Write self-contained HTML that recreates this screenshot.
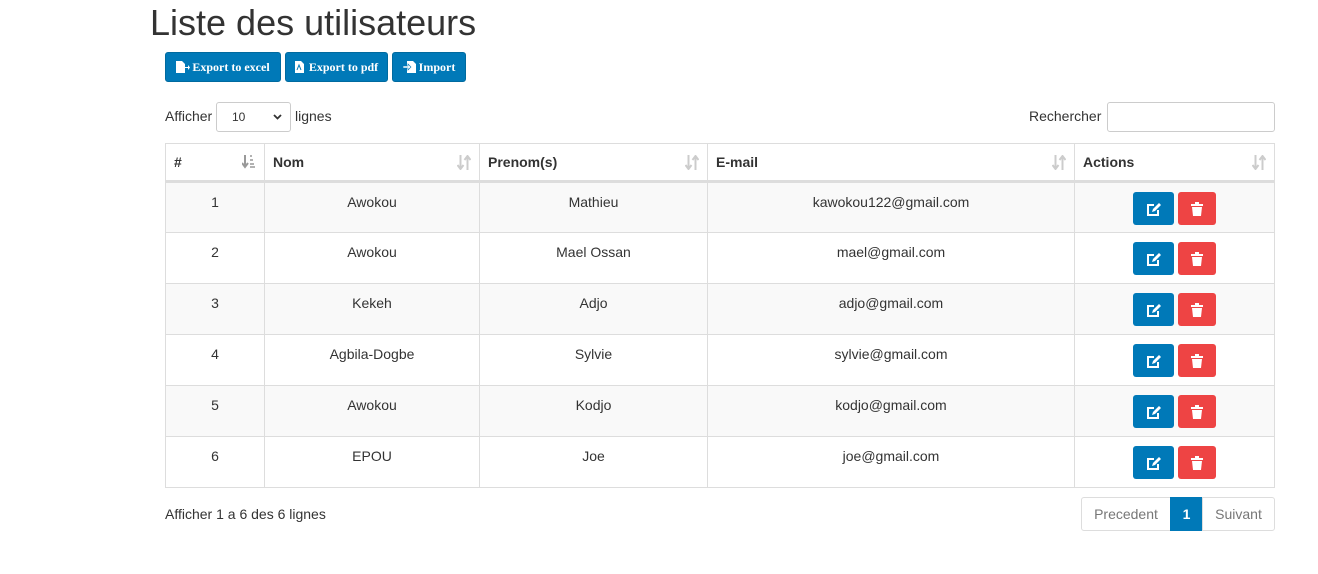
<!DOCTYPE html>
<html><head><style>
*{box-sizing:border-box}
body{margin:0;width:1318px;height:574px;background:#fff;font-family:"Liberation Sans",sans-serif;font-size:14px;color:#333;position:relative;overflow:hidden}
.abs{position:absolute}
h1{position:absolute;left:150px;top:2px;margin:0;font-weight:400;font-size:36px;color:#333}
.eb{position:absolute;top:52px;height:30px;background:#0079b8;border:1px solid #006a9f;border-radius:3px;color:#fff;font-family:"Liberation Serif",serif;font-weight:bold;font-size:12px;line-height:28px;text-align:center}
.eb svg{vertical-align:-2px;margin-right:2px}
table{position:absolute;left:165px;top:143px;width:1110px;border-collapse:collapse}
td,th{border:1px solid #ddd;padding:0 8px}
th{height:38px;text-align:left;font-weight:bold;border-bottom:3px solid #ddd;position:relative}
th svg{position:absolute;right:8px;top:11px}
td{height:51px;text-align:center;vertical-align:top;padding-top:11px}
tr:nth-child(even) td{background:#f9f9f9}
.b{display:inline-block;width:41px;height:33px;border-radius:3px;margin-top:-2px;vertical-align:top;position:relative}
.b svg{position:absolute;left:50%;top:50%;transform:translate(-50%,-50%)}
.be{background:#0079b8;margin-right:4px}
.bd{background:#ee4444;width:38px}
.pg{position:absolute;top:497px;height:34px;border:1px solid #ddd;line-height:32px;text-align:center;color:#777}
</style></head><body>
<h1>Liste des utilisateurs</h1>
<div class="eb" style="left:165px;width:116px"><svg width="14" height="12" viewBox="0 0 14 12"><path d="M0 0h6l3 3v9H0z" fill="#fff"/><path d="M8 6h4V4l2 2.5L12 9V7H8z" fill="#fff"/></svg>Export to excel</div>
<div class="eb" style="left:285px;width:103px"><svg width="9" height="12" viewBox="0 0 9 12"><path d="M0 0h6l3 3v9H0z" fill="#fff"/><path d="M2 9l2-5 2 5" stroke="#0079b8" fill="none"/></svg> Export to pdf</div>
<div class="eb" style="left:392px;width:74px"><svg width="14" height="12" viewBox="0 0 14 12"><path d="M4 0h6l3 3v9H4z" fill="#fff"/><path d="M0 5h5V3l3 3-3 3V7H0z" fill="#fff" stroke="#0079b8" stroke-width=".6"/></svg>Import</div>
<div class="abs" style="left:165px;top:108px">Afficher</div>
<div class="abs" style="left:216px;top:102px;width:75px;height:30px;border:1px solid #ccc;border-radius:3px;font-size:12px;padding:7px 0 0 15px">10<svg style="position:absolute;right:8px;top:11px" width="9" height="6" viewBox="0 0 9 6"><path d="M1 1l3.5 3.5L8 1" stroke="#333" stroke-width="1.8" fill="none"/></svg></div>
<div class="abs" style="left:295px;top:108px">lignes</div>
<div class="abs" style="left:1029px;top:108px">Rechercher</div>
<div class="abs" style="left:1107px;top:102px;width:168px;height:30px;border:1px solid #ccc;border-radius:3px"></div>
<table>
<tr><th style="width:99px">#<svg width="14" height="14" viewBox="0 0 14 14"><path d="M3 0v11M0 8l3 4 3-4" stroke="#999" stroke-width="2" fill="none"/><path d="M8 1h2M8 5h3M8 9h4M8 12h5" stroke="#999" stroke-width="1.6"/></svg></th><th style="width:215px">Nom<svg width="14" height="15" viewBox="0 0 14 15"><path d="M3.5 0v13M0.5 10l3 4 3-4M10.5 15V2M7.5 5l3-4 3 4" stroke="#ccc" stroke-width="2" fill="none"/></svg></th><th style="width:228px">Prenom(s)<svg width="14" height="15" viewBox="0 0 14 15"><path d="M3.5 0v13M0.5 10l3 4 3-4M10.5 15V2M7.5 5l3-4 3 4" stroke="#ccc" stroke-width="2" fill="none"/></svg></th><th style="width:367px">E-mail<svg width="14" height="15" viewBox="0 0 14 15"><path d="M3.5 0v13M0.5 10l3 4 3-4M10.5 15V2M7.5 5l3-4 3 4" stroke="#ccc" stroke-width="2" fill="none"/></svg></th><th>Actions<svg width="14" height="15" viewBox="0 0 14 15"><path d="M3.5 0v13M0.5 10l3 4 3-4M10.5 15V2M7.5 5l3-4 3 4" stroke="#ccc" stroke-width="2" fill="none"/></svg></th></tr>
<tr><td>1</td><td>Awokou</td><td>Mathieu</td><td>kawokou122@gmail.com</td><td><span class="b be"><svg width="16" height="14" viewBox="0 0 16 14"><path d="M8 3H2v10h10V8" stroke="#fff" stroke-width="2" fill="none"/><path d="M6 10l1-3 6-6 2 2-6 6z" fill="#fff"/></svg></span><span class="b bd"><svg width="12" height="14" viewBox="0 0 12 14"><path d="M0 2h12v2H0zM4 0h4v2H4zM1 5h10l-1 9H2z" fill="#fff"/></svg></span></td></tr>
<tr><td>2</td><td>Awokou</td><td>Mael Ossan</td><td>mael@gmail.com</td><td><span class="b be"><svg width="16" height="14" viewBox="0 0 16 14"><path d="M8 3H2v10h10V8" stroke="#fff" stroke-width="2" fill="none"/><path d="M6 10l1-3 6-6 2 2-6 6z" fill="#fff"/></svg></span><span class="b bd"><svg width="12" height="14" viewBox="0 0 12 14"><path d="M0 2h12v2H0zM4 0h4v2H4zM1 5h10l-1 9H2z" fill="#fff"/></svg></span></td></tr>
<tr><td>3</td><td>Kekeh</td><td>Adjo</td><td>adjo@gmail.com</td><td><span class="b be"><svg width="16" height="14" viewBox="0 0 16 14"><path d="M8 3H2v10h10V8" stroke="#fff" stroke-width="2" fill="none"/><path d="M6 10l1-3 6-6 2 2-6 6z" fill="#fff"/></svg></span><span class="b bd"><svg width="12" height="14" viewBox="0 0 12 14"><path d="M0 2h12v2H0zM4 0h4v2H4zM1 5h10l-1 9H2z" fill="#fff"/></svg></span></td></tr>
<tr><td>4</td><td>Agbila-Dogbe</td><td>Sylvie</td><td>sylvie@gmail.com</td><td><span class="b be"><svg width="16" height="14" viewBox="0 0 16 14"><path d="M8 3H2v10h10V8" stroke="#fff" stroke-width="2" fill="none"/><path d="M6 10l1-3 6-6 2 2-6 6z" fill="#fff"/></svg></span><span class="b bd"><svg width="12" height="14" viewBox="0 0 12 14"><path d="M0 2h12v2H0zM4 0h4v2H4zM1 5h10l-1 9H2z" fill="#fff"/></svg></span></td></tr>
<tr><td>5</td><td>Awokou</td><td>Kodjo</td><td>kodjo@gmail.com</td><td><span class="b be"><svg width="16" height="14" viewBox="0 0 16 14"><path d="M8 3H2v10h10V8" stroke="#fff" stroke-width="2" fill="none"/><path d="M6 10l1-3 6-6 2 2-6 6z" fill="#fff"/></svg></span><span class="b bd"><svg width="12" height="14" viewBox="0 0 12 14"><path d="M0 2h12v2H0zM4 0h4v2H4zM1 5h10l-1 9H2z" fill="#fff"/></svg></span></td></tr>
<tr><td>6</td><td>EPOU</td><td>Joe</td><td>joe@gmail.com</td><td><span class="b be"><svg width="16" height="14" viewBox="0 0 16 14"><path d="M8 3H2v10h10V8" stroke="#fff" stroke-width="2" fill="none"/><path d="M6 10l1-3 6-6 2 2-6 6z" fill="#fff"/></svg></span><span class="b bd"><svg width="12" height="14" viewBox="0 0 12 14"><path d="M0 2h12v2H0zM4 0h4v2H4zM1 5h10l-1 9H2z" fill="#fff"/></svg></span></td></tr>
</table>
<div class="abs" style="left:165px;top:506px">Afficher 1 a 6 des 6 lignes</div>
<div class="pg" style="left:1081px;width:90px;border-radius:3px 0 0 3px">Precedent</div>
<div class="pg" style="left:1170px;width:33px;background:#0079b8;border-color:#0079b8;color:#fff;font-weight:bold">1</div>
<div class="pg" style="left:1202px;width:73px;border-radius:0 3px 3px 0">Suivant</div>
</body></html>
